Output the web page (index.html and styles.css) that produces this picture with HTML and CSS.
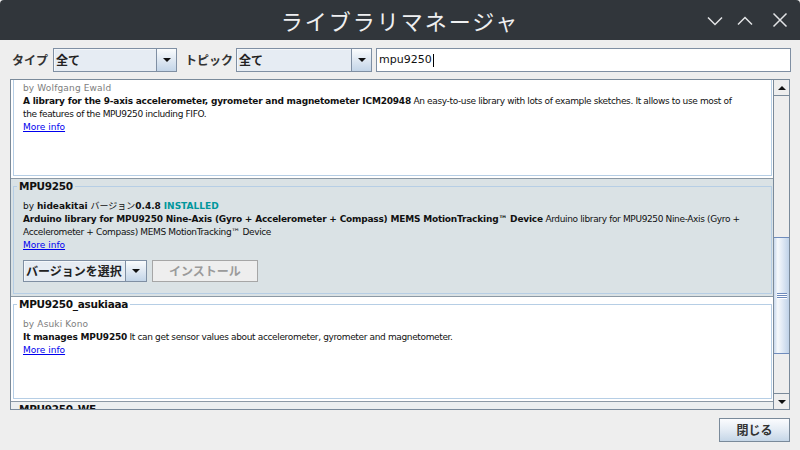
FILE: index.html
```html
<!DOCTYPE html>
<html lang="ja">
<head>
<meta charset="utf-8">
<title>ライブラリマネージャ</title>
<link rel="stylesheet" href="styles.css">
</head>
<body>
<div class="window">
  <header class="titlebar">
    <div class="tb-spacer"></div>
    <h1 class="title">ライブラリマネージャ</h1>
    <div class="controls">
      <svg viewBox="0 0 16 16"><path d="M1 5.5 8 12.5 15 5.5"/></svg>
      <svg viewBox="0 0 16 16"><path d="M1 12.5 8 5.5 15 12.5"/></svg>
      <svg class="close" viewBox="0 0 16 16"><path d="M1.5 1.5 14.5 14.5M14.5 1.5 1.5 14.5"/></svg>
    </div>
  </header>

  <div class="filters">
    <span class="flabel flabel-type">タイプ</span>
    <div class="combo combo-type"><span class="combo-value">全て</span><span class="combo-btn"><i class="tri"></i></span></div>
    <span class="flabel flabel-topic">トピック</span>
    <div class="combo combo-topic"><span class="combo-value">全て</span><span class="combo-btn"><i class="tri"></i></span></div>
    <div class="search">mpu9250<span class="caret"></span></div>
  </div>

  <div class="list">
    <div class="viewport">
      <div class="cards">
        <section class="card">
          <fieldset>
            <legend>ICM20948_WE</legend>
            <div class="body">
              <p class="by">by Wolfgang Ewald</p>
              <p class="desc"><b>A library for the 9-axis accelerometer, gyrometer and magnetometer ICM20948</b> An easy-to-use library with lots of example sketches. It allows to use most of<br>the features of the MPU9250 including FIFO.</p>
              <p class="more"><a>More info</a></p>
              <div class="actions"></div>
            </div>
          </fieldset>
        </section>

        <section class="card selected">
          <fieldset>
            <legend>MPU9250</legend>
            <div class="body">
              <p class="by installed">by <b>hideakitai</b> バージョン<b>0.4.8</b> <b class="inst">INSTALLED</b></p>
              <p class="desc"><b>Arduino library for MPU9250 Nine-Axis (Gyro + Accelerometer + Compass) MEMS MotionTracking™ Device</b> Arduino library for MPU9250 Nine-Axis (Gyro +<br>Accelerometer + Compass) MEMS MotionTracking™ Device</p>
              <p class="more"><a>More info</a></p>
              <div class="actions">
                <div class="combo combo-ver"><span class="combo-value">バージョンを選択</span><span class="combo-btn"><i class="tri"></i></span></div>
                <span class="btn-install">インストール</span>
              </div>
            </div>
          </fieldset>
        </section>

        <section class="card">
          <fieldset>
            <legend>MPU9250_asukiaaa</legend>
            <div class="body">
              <p class="by">by Asuki Kono</p>
              <p class="desc"><b>It manages MPU9250</b> It can get sensor values about accelerometer, gyrometer and magnetometer.</p>
              <p class="more"><a>More info</a></p>
              <div class="actions"></div>
            </div>
          </fieldset>
        </section>

        <section class="card alt">
          <fieldset>
            <legend>MPU9250_WE</legend>
          </fieldset>
        </section>
      </div>
    </div>
    <div class="scrollbar">
      <div class="sb-btn sb-up"><i class="tri-up"></i></div>
      <div class="sb-track">
        <div class="sb-thumb"><span class="grip"></span></div>
      </div>
      <div class="sb-btn sb-down"><i class="tri"></i></div>
    </div>
  </div>

  <div class="footer">
    <span class="btn-close">閉じる</span>
  </div>
</div>
</body>
</html>
```

FILE: styles.css
```css
* { box-sizing: border-box; margin: 0; padding: 0; }
html, body { width: 800px; height: 450px; overflow: hidden; }
body {
  background: #eeeeee;
  font-family: "Noto Sans CJK JP", "DejaVu Sans", sans-serif;
  color: #222;
}
.window { height: 450px; display: flex; flex-direction: column; }

/* title bar */
.titlebar {
  flex: none;
  height: 40px;
  background: #31363b;
  border-radius: 4px 4px 0 0;
  display: grid;
  grid-template-columns: 1fr auto 1fr;
  align-items: center;
}
.title {
  font-family: "Noto Sans CJK JP", sans-serif;
  font-weight: 400;
  font-size: 22px;
  letter-spacing: 2px;
  line-height: 40px;
  color: #eff0f1;
}
.controls {
  justify-self: end;
  display: flex;
  align-items: center;
  gap: 14px;
  padding-right: 12px;
}
.controls svg {
  display: block;
  width: 16px;
  height: 16px;
  fill: none;
  stroke: #e2e4e6;
  stroke-width: 1.5;
}
.controls .close { margin-left: 5px; }

/* filter row */
.filters {
  flex: none;
  display: flex;
  align-items: center;
  height: 24px;
  margin: 8px 9px 0 12px;
}
.flabel {
  font-size: 12px;
  font-weight: 700;
  color: #333;
  white-space: nowrap;
  line-height: 16px;
}
.flabel-type { width: 41px; }
.flabel-topic { width: 51px; margin-left: 8px; }
.combo {
  display: flex;
  height: 24px;
  border: 1px solid #7f8fa3;
}
.combo-value {
  flex: 1;
  background: #e6ecf3;
  box-shadow: inset 1px 1px 0 #f4f7fa;
  border-right: 1px solid #7f8fa3;
  font-size: 12px;
  font-weight: 700;
  color: #222;
  line-height: 22px;
  padding-left: 2px;
  white-space: nowrap;
}
.combo-btn {
  width: 19px;
  flex: none;
  background: linear-gradient(#fafcfd, #dfe8f2 50%, #c3d5e8);
  display: flex;
  align-items: center;
  justify-content: center;
}
.tri {
  display: block;
  width: 0;
  height: 0;
  border-left: 4px solid transparent;
  border-right: 4px solid transparent;
  border-top: 4px solid #111;
}
.combo-type { width: 124px; }
.combo-topic { width: 136px; }
.search {
  flex: 1;
  margin-left: 4px;
  height: 24px;
  background: #fff;
  border: 1px solid #7f8fa3;
  font-family: "DejaVu Sans", sans-serif;
  font-size: 11px;
  line-height: 22px;
  padding-left: 2px;
  color: #111;
  display: flex;
  align-items: center;
}
.caret {
  display: inline-block;
  width: 1px;
  height: 13px;
  background: #000;
  margin-left: 1px;
}

/* list */
.list {
  flex: none;
  height: 331px;
  margin: 7px 10px 0 10px;
  border: 1px solid #7a8a9a;
  display: flex;
  background: #fff;
}
.viewport {
  flex: 1;
  overflow: hidden;
}
.cards { margin-top: -19px; }
.card {
  background: #fff;
  border-bottom: 1px solid #8c99a5;
}
.card.selected { background: #dae2e5; }
.card.alt { background: #eceff0; }
.card fieldset {
  min-width: 0;
  margin: 0 1px 2px 2px;
  border: 1px solid #b6cee5;
  padding: 6px 0 11px 0;
}
.card legend {
  margin-left: 3px;
  padding: 0 2px;
  font-family: "DejaVu Sans", sans-serif;
  font-weight: 700;
  font-size: 10.5px;
  letter-spacing: -0.3px;
  line-height: 15px;
  color: #111;
}
.body {
  padding: 0 9px;
  font-family: "DejaVu Sans", "Noto Sans CJK JP", sans-serif;
  font-size: 9px;
  line-height: 13px;
  color: #111;
  white-space: nowrap;
}
.desc { letter-spacing: -0.36px; }
.desc b { letter-spacing: -0.2px; }
.by { color: #7d7d7d; letter-spacing: 0.15px; }
.by.installed { color: #111; letter-spacing: 0; }
.inst { color: #00979c; }
.more a {
  color: #0000ee;
  text-decoration: underline;
}
.actions {
  margin-top: 8px;
  height: 22px;
  display: flex;
}
.combo-ver { width: 124px; height: 22px; }
.combo-ver .combo-value {
  font-family: "Noto Sans CJK JP", sans-serif;
  line-height: 20px;
  padding-left: 2px;
  color: #222;
}
.combo-ver .combo-btn { width: 20px; }
.btn-install {
  margin-left: 5px;
  width: 106px;
  height: 22px;
  border: 1px solid #a6a6a6;
  background: #eeeeee;
  font-family: "Noto Sans CJK JP", sans-serif;
  font-size: 12px;
  font-weight: 700;
  color: #9b9b9b;
  line-height: 20px;
  text-align: center;
}

/* scrollbar */
.scrollbar {
  flex: none;
  width: 16px;
  border-left: 1px solid #7a8a9a;
  background: #eeeeee;
  display: flex;
  flex-direction: column;
}
.sb-btn {
  flex: none;
  height: 16px;
  background: #eeeeee;
  display: flex;
  align-items: center;
  justify-content: center;
}
.sb-up { border-bottom: 1px solid #7a8a9a; }
.sb-down { border-top: 1px solid #7a8a9a; }
.tri-up {
  display: block;
  width: 0;
  height: 0;
  border-left: 4px solid transparent;
  border-right: 4px solid transparent;
  border-bottom: 4px solid #111;
}
.sb-track {
  flex: 1;
  display: flex;
  flex-direction: column;
}
.sb-thumb {
  margin-top: 141px;
  height: 117px;
  border-top: 1px solid #6f8cbd;
  border-bottom: 1px solid #6f8cbd;
  background: linear-gradient(to right, #c8d8ec 0, #f6f9fc 25%, #e1eaf5 55%, #bfd2e8 100%);
  display: flex;
  align-items: center;
  justify-content: center;
}
.grip {
  display: block;
  width: 10px;
  height: 6px;
  background: repeating-linear-gradient(#6c89bb 0 1px, #ffffff 1px 2px);
}

/* footer */
.footer {
  flex: none;
  display: flex;
  justify-content: flex-end;
  padding: 8px 10px 0 0;
}
.btn-close {
  width: 71px;
  height: 24px;
  border: 1px solid #7a8a9a;
  background: linear-gradient(#fbfcfe, #e3ebf4 50%, #c5d6e7);
  font-family: "Noto Sans CJK JP", sans-serif;
  font-size: 12px;
  font-weight: 700;
  color: #333;
  line-height: 22px;
  text-align: center;
}
```
